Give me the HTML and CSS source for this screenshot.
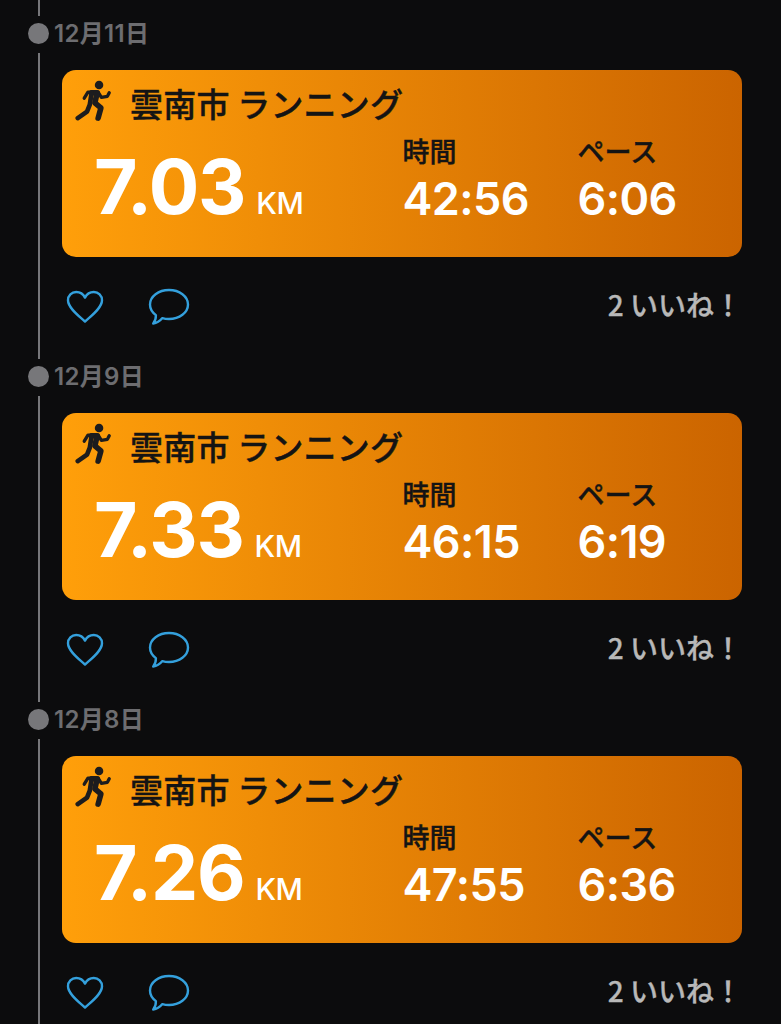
FILE: index.html
```html
<!DOCTYPE html>
<html lang="ja">
<head>
<meta charset="utf-8">
<title>アクティビティ</title>
<link rel="stylesheet" href="styles.css">
</head>
<body>
<svg class="defs" width="0" height="0" aria-hidden="true">
  <symbol id="runner" viewBox="0 0 40 44">
    <circle cx="26" cy="4.8" r="4.6" fill="#1c1c1e"/>
    <path d="M10 19 L14 12.5 L25 12.5 L28.5 18 L35 17 L37 13" fill="none" stroke="#1c1c1e" stroke-width="3.6" stroke-linecap="round" stroke-linejoin="round"/>
    <path d="M18 13 L24 13 L21.5 24 L28 29.5 L25 40.5" fill="none" stroke="#1c1c1e" stroke-width="6" stroke-linecap="round" stroke-linejoin="round"/>
    <path d="M18 13 L16 26 L13 33.5 L3 40.5" fill="none" stroke="#1c1c1e" stroke-width="5" stroke-linecap="round" stroke-linejoin="round"/>
  </symbol>
  <symbol id="heart" viewBox="0 0 38 34">
    <path d="M19 31.5 C13 26 2 18 2 10.2 C2 5.4 5.6 2 10.2 2 C14 2 17.3 4.2 19 7.6 C20.7 4.2 24 2 27.8 2 C32.4 2 36 5.4 36 10.2 C36 18 25 26 19 31.5 Z" fill="none" stroke="#34a0dc" stroke-width="2.4" stroke-linejoin="round"/>
  </symbol>
  <symbol id="bubble" viewBox="0 0 42 38">
    <path d="M21 2 C31.5 2 40 8.4 40 16.5 C40 24.6 31.5 31 21 31 C18.6 31 16.4 30.7 14.4 30.1 C12 33 8.4 35.2 5.2 35.6 C7 33.4 8 30.6 7.9 27.1 C4.2 24.4 2 20.7 2 16.5 C2 8.4 10.5 2 21 2 Z" fill="none" stroke="#34a0dc" stroke-width="2.4" stroke-linejoin="round"/>
  </symbol>
</svg>
<main class="feed">
  <article class="entry">
    <header class="date"><span class="dot"></span><time class="date-text">12月11日</time></header>
    <div class="body">
      <section class="card">
        <h2 class="title"><svg class="runner"><use href="#runner"/></svg><span>雲南市 ランニング</span></h2>
        <div class="stats">
          <div class="distance"><span class="km-value">7.03</span><span class="km-unit">KM</span></div>
          <div class="stat"><span class="label">時間</span><span class="value">42:56</span></div>
          <div class="stat"><span class="label">ペース</span><span class="value">6:06</span></div>
        </div>
      </section>
      <div class="actions">
        <svg class="heart"><use href="#heart"/></svg>
        <svg class="bubble"><use href="#bubble"/></svg>
        <span class="likes">2 いいね！</span>
      </div>
    </div>
  </article>
  <article class="entry">
    <header class="date"><span class="dot"></span><time class="date-text">12月9日</time></header>
    <div class="body">
      <section class="card">
        <h2 class="title"><svg class="runner"><use href="#runner"/></svg><span>雲南市 ランニング</span></h2>
        <div class="stats">
          <div class="distance"><span class="km-value">7.33</span><span class="km-unit">KM</span></div>
          <div class="stat"><span class="label">時間</span><span class="value">46:15</span></div>
          <div class="stat"><span class="label">ペース</span><span class="value">6:19</span></div>
        </div>
      </section>
      <div class="actions">
        <svg class="heart"><use href="#heart"/></svg>
        <svg class="bubble"><use href="#bubble"/></svg>
        <span class="likes">2 いいね！</span>
      </div>
    </div>
  </article>
  <article class="entry">
    <header class="date"><span class="dot"></span><time class="date-text">12月8日</time></header>
    <div class="body">
      <section class="card">
        <h2 class="title"><svg class="runner"><use href="#runner"/></svg><span>雲南市 ランニング</span></h2>
        <div class="stats">
          <div class="distance"><span class="km-value">7.26</span><span class="km-unit">KM</span></div>
          <div class="stat"><span class="label">時間</span><span class="value">47:55</span></div>
          <div class="stat"><span class="label">ペース</span><span class="value">6:36</span></div>
        </div>
      </section>
      <div class="actions">
        <svg class="heart"><use href="#heart"/></svg>
        <svg class="bubble"><use href="#bubble"/></svg>
        <span class="likes">2 いいね！</span>
      </div>
    </div>
  </article>
</main>
</body>
</html>
```
FILE: styles.css
```css
* { box-sizing: border-box; }
html, body { margin: 0; height: 100%; }
body {
  background: #0c0c0d;
  font-family: Inter, "Noto Sans CJK JP", sans-serif;
  overflow: hidden;
}
.defs { position: absolute; }
.feed {
  padding-top: 16px;
  height: 1024px;
  overflow: hidden;
  background: linear-gradient(#77777a, #77777a) 38px 0 / 2px 16px no-repeat;
}
.entry { display: flex; flex-direction: column; }
.date {
  height: 37px;
  display: flex;
  align-items: center;
  padding-left: 28px;
  padding-bottom: 2px;
  gap: 5px;
}
.dot {
  width: 21px;
  height: 21px;
  border-radius: 50%;
  background: #77777a;
}
.date-text {
  font-size: 24px;
  font-weight: 600;
  color: #6d6d70;
  line-height: 1;
  letter-spacing: .3px;
}
.body {
  height: 306px;
  margin-left: 38px;
  padding: 17px 39px 0 22px;
  border-left: 2px solid #77777a;
}
.card {
  height: 187px;
  border-radius: 14px;
  background: linear-gradient(90deg, #ff9f0a, #cb6400);
  padding: 13px 0 0 13px;
}
.title {
  margin: 0;
  height: 40px;
  display: flex;
  align-items: center;
  gap: 18px;
  font-family: "Noto Sans CJK JP", sans-serif;
  font-size: 33px;
  font-weight: 500;
  -webkit-text-stroke: .4px #141414;
  color: #141414;
  line-height: 1;
  letter-spacing: .2px;
  white-space: nowrap;
}
.runner { width: 37px; height: 44px; flex: none; margin-top: -4px; }
.stats {
  display: grid;
  grid-template-columns: 308.5px 175px 1fr;
  padding-left: 19px;
  margin-top: 9px;
}
.distance {
  display: flex;
  align-items: baseline;
  gap: 11px;
  padding-top: 17px;
}
.km-value {
  font-size: 75px;
  font-weight: 700;
  color: #fff;
  line-height: 76px;
  letter-spacing: -1.2px;
}
.km-unit {
  font-size: 30px;
  font-weight: 500;
  color: #fff;
  letter-spacing: -.5px;
}
.stat { display: flex; flex-direction: column; }
.label {
  font-family: "Noto Sans CJK JP", sans-serif;
  font-size: 27px;
  font-weight: 500;
  -webkit-text-stroke: .4px #141414;
  color: #141414;
  line-height: 38px;
}
.value {
  font-size: 45px;
  font-weight: 600;
  color: #fff;
  line-height: 58px;
  letter-spacing: -.6px;
}
.actions {
  display: flex;
  align-items: center;
  height: 100px;
  padding-left: 4px;
}
.heart { width: 38px; height: 34px; margin-right: 44px; }
.bubble { width: 42px; height: 38px; }
.likes {
  margin-left: auto;
  margin-top: -6px;
  font-family: "Noto Sans CJK JP", sans-serif;
  font-size: 28px;
  font-weight: 500;
  -webkit-text-stroke: .3px #b8b8b8;
  color: #b8b8b8;
  white-space: nowrap;
}
```
